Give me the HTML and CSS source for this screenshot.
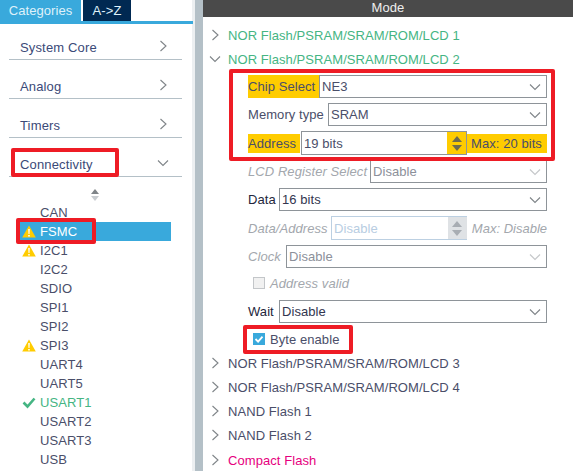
FILE: index.html
```html
<!DOCTYPE html>
<html lang="en">
<head>
<meta charset="utf-8">
<title>FSMC Mode</title>
<link rel="stylesheet" href="styles.css">
</head>
<body>
<svg class="defs" width="0" height="0" aria-hidden="true">
  <defs>
    <symbol id="right" viewBox="0 0 12 12"><path d="M3.5 1l5.5 5-5.5 5" fill="none" stroke="#7f8488" stroke-width="1.1"/></symbol>
    <symbol id="down" viewBox="0 0 12 12"><path d="M1 3.5l5 5 5-5" fill="none" stroke="#7f8488" stroke-width="1.1"/></symbol>
    <symbol id="warn" viewBox="0 0 14 13"><path d="M7 .5l6.8 12H.2z" fill="#ffcc00"/><path d="M6.2 4h1.6l-.3 5h-1zM6.2 10h1.6v1.6H6.2z" fill="#fff"/></symbol>
  </defs>
</svg>
<div class="app">
  <aside class="side">
    <nav class="tabs">
      <span class="tab tab-on">Categories</span>
      <span class="tab tab-off">A-&gt;Z</span>
    </nav>
    <div class="cats">
      <div class="cat"><span>System Core</span><svg class="cat-ico"><use href="#right"/></svg></div>
      <div class="cat"><span>Analog</span><svg class="cat-ico"><use href="#right"/></svg></div>
      <div class="cat"><span>Timers</span><svg class="cat-ico"><use href="#right"/></svg></div>
      <div class="cat"><span>Connectivity</span><svg class="cat-ico"><use href="#down"/></svg></div>
    </div>
    <div class="sorter"><i class="sort-up"></i><i class="sort-down"></i></div>
    <ul class="periph">
      <li class="p">CAN</li>
      <li class="p p-sel"><svg class="p-ico"><use href="#warn"/></svg>FSMC</li>
      <li class="p"><svg class="p-ico"><use href="#warn"/></svg>I2C1</li>
      <li class="p">I2C2</li>
      <li class="p">SDIO</li>
      <li class="p">SPI1</li>
      <li class="p">SPI2</li>
      <li class="p"><svg class="p-ico"><use href="#warn"/></svg>SPI3</li>
      <li class="p">UART4</li>
      <li class="p">UART5</li>
      <li class="p p-ok"><svg class="p-ico" viewBox="0 0 14 13"><path d="M1.5 6.5l4 4 7-8" fill="none" stroke="#45b583" stroke-width="2.6"/></svg>USART1</li>
      <li class="p">USART2</li>
      <li class="p">USART3</li>
      <li class="p">USB</li>
    </ul>
    <div class="mark mark-conn"></div>
    <div class="mark mark-fsmc"></div>
  </aside>
  <main class="main">
    <header class="head">Mode</header>
    <div class="tree green"><svg class="tree-ico"><use href="#right"/></svg>NOR Flash/PSRAM/SRAM/ROM/LCD 1</div>
    <div class="tree green"><svg class="tree-ico"><use href="#down"/></svg>NOR Flash/PSRAM/SRAM/ROM/LCD 2</div>
    <section class="form">
      <div class="row">
        <label class="lab hl lab-chip">Chip Select</label>
        <div class="sel">NE3<svg class="sel-ico"><use href="#down"/></svg></div>
      </div>
      <div class="row">
        <label class="lab lab-gap">Memory type</label>
        <div class="sel">SRAM<svg class="sel-ico"><use href="#down"/></svg></div>
      </div>
      <div class="row row-spin">
        <label class="lab hl hl-spin lab-addr">Address</label>
        <div class="spin">
          <span class="spin-val">19 bits</span>
          <span class="spin-btn spin-warn"><i class="up"></i><i class="dn"></i></span>
        </div>
        <span class="max hl hl-spin">Max: 20 bits</span>
      </div>
      <div class="row">
        <label class="lab off lab-lcd">LCD Register Select</label>
        <div class="sel sel-off">Disable<svg class="sel-ico ico-off"><use href="#down"/></svg></div>
      </div>
      <div class="row">
        <label class="lab lab-dark lab-short">Data</label>
        <div class="sel sel-dark">16 bits<svg class="sel-ico"><use href="#down"/></svg></div>
      </div>
      <div class="row row-spin">
        <label class="lab off lab-da">Data/Address</label>
        <div class="spin spin-off">
          <span class="spin-val">Disable</span>
          <span class="spin-btn"><i class="up"></i><i class="dn"></i></span>
        </div>
        <span class="max off max-off">Max: Disable</span>
      </div>
      <div class="row">
        <label class="lab off lab-clock">Clock</label>
        <div class="sel sel-off">Disable<svg class="sel-ico ico-off"><use href="#down"/></svg></div>
      </div>
      <div class="check check-off"><span class="box"></span><em>Address valid</em></div>
      <div class="row">
        <label class="lab lab-dark lab-short">Wait</label>
        <div class="sel sel-dark">Disable<svg class="sel-ico"><use href="#down"/></svg></div>
      </div>
      <div class="check check-on">
        <span class="box box-on"><svg viewBox="0 0 12 12"><path d="M2.5 6l2.6 2.6 4.4-5" fill="none" stroke="#fff" stroke-width="1.8"/></svg></span>Byte enable
      </div>
    </section>
    <div class="tree"><svg class="tree-ico"><use href="#right"/></svg>NOR Flash/PSRAM/SRAM/ROM/LCD 3</div>
    <div class="tree"><svg class="tree-ico"><use href="#right"/></svg>NOR Flash/PSRAM/SRAM/ROM/LCD 4</div>
    <div class="tree"><svg class="tree-ico"><use href="#right"/></svg>NAND Flash 1</div>
    <div class="tree"><svg class="tree-ico"><use href="#right"/></svg>NAND Flash 2</div>
    <div class="tree pink"><svg class="tree-ico"><use href="#right"/></svg>Compact Flash</div>
    <div class="mark mark-form"></div>
    <div class="mark mark-byte"></div>
  </main>
</div>
</body>
</html>
```
FILE: styles.css
```css
* { box-sizing: border-box; }
html, body { margin: 0; padding: 0; height: 100%; overflow: hidden; }
body {
  font-family: "Liberation Sans", Arial, sans-serif;
  font-size: 13px;
  letter-spacing: 0.07px;
  color: #4a4e69;
  background: #fff;
}
.defs { position: absolute; }
.app { display: flex; height: 471px; }

.side {
  position: relative;
  flex: 0 0 203px;
  border-right: 8px solid #b4c0c7;
  background: #fff;
  box-shadow: inset -3px 0 0 #eceff1;
}
.tabs {
  display: flex;
  height: 24px;
  border-bottom: 3px solid #39a9dc;
  width: 193px;
  gap: 2px;
}
.tab { display: flex; align-items: center; justify-content: center; height: 21px; color: #dff1fa; }
.tab-on { width: 81px; background: #39a9dc; }
.tab-off { width: 48px; background: #002952; }

.cats { padding: 0 0 0 9px; width: 182px; margin-top: -3px; }
.cat {
  display: flex;
  align-items: center;
  justify-content: space-between;
  height: 39px;
  padding: 14px 13px 0 11px;
  border-bottom: 1px solid #b4c0c7;
  color: #3b4a78;
  letter-spacing: 0.15px;
}
.cat-ico { width: 12px; height: 12px; margin-top: -2px; }
.sorter {
  display: flex;
  flex-direction: column;
  align-items: center;
  gap: 2px;
  width: 189px;
  padding-top: 12px;
  height: 26px;
}
.sort-up { border: 4px solid transparent; border-top: 0; border-bottom: 5px solid #7f8488; }
.sort-down { border: 4px solid transparent; border-bottom: 0; border-top: 5px solid #c8ccd0; }
.periph { list-style: none; margin: 0 0 0 20px; padding: 0; width: 151px; }
.p { position: relative; height: 19px; line-height: 19px; padding-left: 20px; }
.p-ico { position: absolute; left: 2px; top: 3px; width: 14px; height: 13px; }
.p-sel { background: #39a9dc; color: #fff; }
.p-ok { color: #45b583; }

.main { position: relative; flex: 1; min-width: 0; }
.head {
  height: 17px;
  line-height: 15px;
  text-align: center;
  background: #4a4a4a;
  color: #eee;
  margin-bottom: 7px;
}
.tree { position: relative; height: 24px; line-height: 24px; padding-left: 25px; }
.tree-ico { position: absolute; left: 6px; top: 5px; width: 12px; height: 12px; }
.green { color: #45b583; }
.pink { color: #e6007e; margin-top: 1px; }

.form {
  display: flex;
  flex-direction: column;
  gap: 5px;
  padding: 3px 26px 0 45px;
  height: 280px;
}
.row { display: flex; align-items: stretch; height: 23px; }
.row-spin { height: 24px; }
.lab { display: flex; align-items: center; white-space: nowrap; }
.lab-gap { margin-right: 4px; }
.lab-chip { flex: 0 0 71px; }
.lab-addr { flex: 0 0 52px; }
.lab-lcd { flex: 0 0 122px; }
.lab-short { flex: 0 0 31px; }
.lab-da { flex: 0 0 83px; }
.lab-clock { flex: 0 0 38px; }
.lab-dark { color: #23263c; }
.hl { background: #ffcc00; }
.hl-spin { margin-top: 3px; height: 19px; }
.off { color: #a3a7ad; font-style: italic; }
.sel {
  position: relative;
  flex: 1;
  min-width: 0;
  display: flex;
  align-items: center;
  padding-left: 2px;
  border: 1px solid #8e9499;
  background: #fff;
}
.sel-off { color: #8c909a; }
.sel-dark { color: #33364f; }
.sel-ico { position: absolute; right: 5px; top: 5px; width: 12px; height: 12px; }
.ico-off { opacity: .45; }
.spin {
  display: flex;
  width: 166px;
  margin-left: 1px;
  border: 1px solid #8e9499;
}
.spin-val { flex: 1; display: flex; align-items: center; padding-left: 2px; }
.spin-btn {
  flex: 0 0 19px;
  display: flex;
  flex-direction: column;
  align-items: center;
  justify-content: center;
  gap: 3px;
  background: #dfe2e5;
}
.spin-warn { background: #ffcc00; }
.up { border: 5px solid transparent; border-top: 0; border-bottom: 6px solid #a8adb3; }
.dn { border: 5px solid transparent; border-bottom: 0; border-top: 6px solid #a8adb3; }
.spin-warn .up { border-bottom-color: #6d6a50; }
.spin-warn .dn { border-top-color: #6d6a50; }
.spin-off { width: 137px; margin-left: 0; border-color: #bcd0e2; border-right: 0; color: #b8cde2; }
.max { display: flex; align-items: center; padding: 0 0 0 4px; margin-left: 0; white-space: nowrap; flex: 1; }
.max-off { padding: 0; margin-left: 5px; letter-spacing: 0; }
.check { display: flex; align-items: center; gap: 5px; padding-left: 5px; height: 22px; }
.check-off { color: #a3a7ad; margin-top: -1px; margin-bottom: 1px; }
.box { flex: 0 0 12px; height: 12px; background: #f1f1f1; border: 1px solid #c3c6c9; }
.box-on { background: #39a9dc; border: 0; }
.box-on svg { display: block; width: 12px; height: 12px; }

.mark { position: absolute; border: 4px solid #ee1c25; border-radius: 2px; pointer-events: none; }
.mark-conn { left: 11px; top: 148px; width: 108px; height: 29px; }
.mark-fsmc { left: 16px; top: 218px; width: 80px; height: 26px; }
.mark-form { left: 26px; top: 69px; width: 326px; height: 92px; }
.mark-byte { left: 40px; top: 325px; width: 110px; height: 29px; }
```
